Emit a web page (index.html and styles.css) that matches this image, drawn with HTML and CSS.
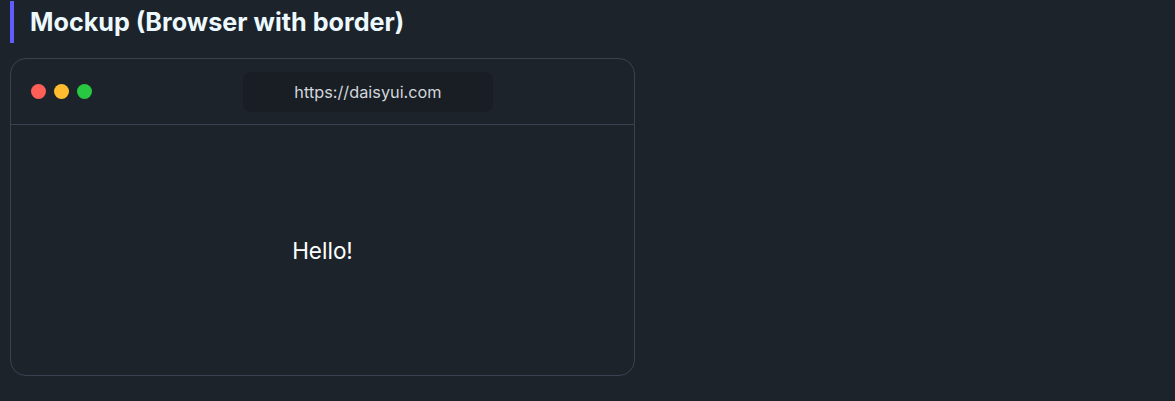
FILE: index.html
```html
<!DOCTYPE html>
<html>
<head>
<meta charset="utf-8">
<link rel="stylesheet" href="styles.css">
</head>
<body>
<div class="page">
  <h2 class="title">Mockup (Browser with border)</h2>
  <div class="browser">
    <div class="toolbar">
      <div class="dots"><span class="dot red"></span><span class="dot yellow"></span><span class="dot green"></span></div>
      <div class="url">https://daisyui.com</div>
    </div>
    <div class="content">Hello!</div>
  </div>
</div>
</body>
</html>
```
FILE: styles.css
```css
html, body {
  margin: 0;
  padding: 0;
  background: #1d232a;
}
body {
  font-family: Inter, "Noto Sans", sans-serif;
  color: #ffffff;
}
.page {
  padding: 1px 10px 10px 10px;
}
.title {
  margin: 0;
  border-left: 4px solid #605dff;
  padding-left: 16px;
  font-size: 25.2px;
  font-weight: 700;
  line-height: 42px;
  color: #ecf9ff;
}
.browser {
  margin-top: 15px;
  width: 623px;
  border: 1px solid #3b4150;
  border-radius: 16px;
  overflow: hidden;
}
.toolbar {
  height: 65px;
  display: flex;
  align-items: center;
  padding-left: 20px;
  border-bottom: 1px solid #3b4150;
}
.dots {
  display: flex;
  gap: 8px;
}
.dot {
  width: 15px;
  height: 15px;
  border-radius: 50%;
  display: block;
}
.red { background: #ff5f57; }
.yellow { background: #febc2e; }
.green { background: #28c840; }
.url {
  width: 250px;
  height: 40px;
  margin-left: 151px;
  border-radius: 8px;
  background: #191e24;
  color: #d2d6dc;
  font-size: 16.3px;
  display: flex;
  align-items: center;
  justify-content: center;
}
.content {
  height: 250px;
  display: flex;
  align-items: center;
  justify-content: center;
  font-size: 22.5px;
  color: #ffffff;
}
```
